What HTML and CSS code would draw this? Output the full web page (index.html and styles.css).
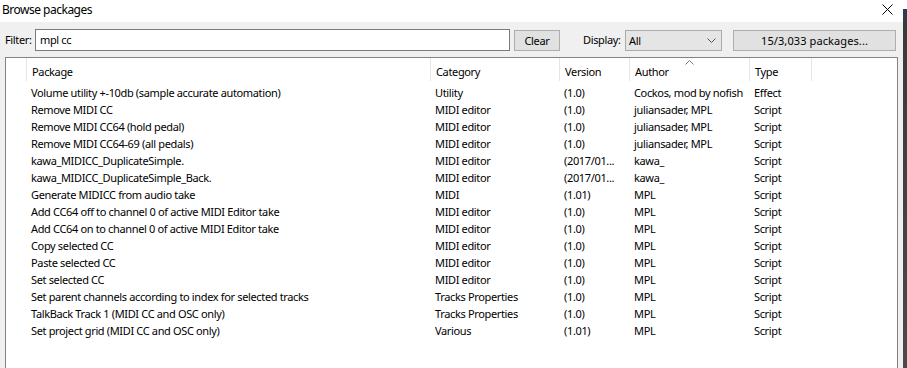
FILE: index.html
```html
<!DOCTYPE html>
<html>
<head>
<meta charset="utf-8">
<link rel="stylesheet" href="styles.css">
</head>
<body>
<div class="window">
  <div class="dialog">
    <div class="titlebar">
      <span class="title">Browse packages</span>
      <svg class="close" width="11" height="11" viewBox="0 0 11 11"><path d="M0.5 0.5L10.5 10.5M10.5 0.5L0.5 10.5" stroke="#000" stroke-width="1"/></svg>
    </div>
    <div class="toolbar">
      <label class="lbl filter">Filter:</label>
      <div class="input">mpl cc</div>
      <div class="btn clear">Clear</div>
      <label class="lbl display">Display:</label>
      <div class="select">
        <span>All</span>
        <svg width="9" height="5" viewBox="0 0 9 5"><path d="M0.5 0.5L4.5 4.5L8.5 0.5" fill="none" stroke="#555" stroke-width="1"/></svg>
      </div>
      <div class="btn count">15/3,033 packages...</div>
    </div>
    <div class="list">
      <div class="row head">
        <div class="c c0"></div>
        <div class="c">Package</div>
        <div class="c">Category</div>
        <div class="c">Version</div>
        <div class="c author">Author<svg class="sort" width="9" height="5" viewBox="0 0 9 5"><path d="M0.5 4.5L4.5 0.5L8.5 4.5" fill="none" stroke="#777" stroke-width="1"/></svg></div>
        <div class="c">Type</div>
        <div class="c"></div>
      </div>
      <div class="row"><div class="c"></div><div class="c">Volume utility +-10db (sample accurate automation)</div><div class="c">Utility</div><div class="c">(1.0)</div><div class="c">Cockos, mod by nofish</div><div class="c">Effect</div></div>
      <div class="row"><div class="c"></div><div class="c">Remove MIDI CC</div><div class="c">MIDI editor</div><div class="c">(1.0)</div><div class="c">juliansader, MPL</div><div class="c">Script</div></div>
      <div class="row"><div class="c"></div><div class="c">Remove MIDI CC64 (hold pedal)</div><div class="c">MIDI editor</div><div class="c">(1.0)</div><div class="c">juliansader, MPL</div><div class="c">Script</div></div>
      <div class="row"><div class="c"></div><div class="c">Remove MIDI CC64-69 (all pedals)</div><div class="c">MIDI editor</div><div class="c">(1.0)</div><div class="c">juliansader, MPL</div><div class="c">Script</div></div>
      <div class="row"><div class="c"></div><div class="c">kawa_MIDICC_DuplicateSimple.</div><div class="c">MIDI editor</div><div class="c">(2017/01...</div><div class="c">kawa_</div><div class="c">Script</div></div>
      <div class="row"><div class="c"></div><div class="c">kawa_MIDICC_DuplicateSimple_Back.</div><div class="c">MIDI editor</div><div class="c">(2017/01...</div><div class="c">kawa_</div><div class="c">Script</div></div>
      <div class="row"><div class="c"></div><div class="c">Generate MIDICC from audio take</div><div class="c">MIDI</div><div class="c">(1.01)</div><div class="c">MPL</div><div class="c">Script</div></div>
      <div class="row"><div class="c"></div><div class="c">Add CC64 off to channel 0 of active MIDI Editor take</div><div class="c">MIDI editor</div><div class="c">(1.0)</div><div class="c">MPL</div><div class="c">Script</div></div>
      <div class="row"><div class="c"></div><div class="c">Add CC64 on to channel 0 of active MIDI Editor take</div><div class="c">MIDI editor</div><div class="c">(1.0)</div><div class="c">MPL</div><div class="c">Script</div></div>
      <div class="row"><div class="c"></div><div class="c">Copy selected CC</div><div class="c">MIDI editor</div><div class="c">(1.0)</div><div class="c">MPL</div><div class="c">Script</div></div>
      <div class="row"><div class="c"></div><div class="c">Paste selected CC</div><div class="c">MIDI editor</div><div class="c">(1.0)</div><div class="c">MPL</div><div class="c">Script</div></div>
      <div class="row"><div class="c"></div><div class="c">Set selected CC</div><div class="c">MIDI editor</div><div class="c">(1.0)</div><div class="c">MPL</div><div class="c">Script</div></div>
      <div class="row"><div class="c"></div><div class="c">Set parent channels according to index for selected tracks</div><div class="c">Tracks Properties</div><div class="c">(1.0)</div><div class="c">MPL</div><div class="c">Script</div></div>
      <div class="row"><div class="c"></div><div class="c">TalkBack Track 1 (MIDI CC and OSC only)</div><div class="c">Tracks Properties</div><div class="c">(1.0)</div><div class="c">MPL</div><div class="c">Script</div></div>
      <div class="row"><div class="c"></div><div class="c">Set project grid (MIDI CC and OSC only)</div><div class="c">Various</div><div class="c">(1.01)</div><div class="c">MPL</div><div class="c">Script</div></div>
    </div>
  </div>
  <div class="edge"></div>
</div>
</body>
</html>
```

FILE: styles.css
```css
* { box-sizing: border-box; }
html, body { margin: 0; padding: 0; }
body {
  width: 907px;
  height: 368px;
  overflow: hidden;
  background: #f0f0f0;
  font-family: "Noto Sans", "Open Sans", sans-serif;
  font-size: 11px;
  letter-spacing: -0.35px;
  color: #000;
}
.window { display: flex; height: 368px; }
.dialog { width: 903px; display: flex; flex-direction: column; }
.edge {
  width: 4px;
  background: linear-gradient(#ffffff 0, #ffffff 9px, #2d3b4f 9px, #3a3a3a 30px, #4a4a4a 100%);
}
.titlebar {
  height: 22px;
  background: #fff;
  display: flex;
  align-items: center;
  justify-content: space-between;
  padding: 0 10px 3px 2px;
}
.title { font-size: 12px; letter-spacing: -0.5px; line-height: 16px; }
.close { margin-top: -1px; }
.toolbar {
  display: flex;
  align-items: center;
  height: 22px;
  margin-top: 7px;
  padding-left: 5px;
}
.lbl { line-height: 22px; white-space: nowrap; }
.filter { width: 27px; }
.input {
  margin-left: 3px;
  width: 475px;
  height: 22px;
  border: 1px solid #7a7a7a;
  background: #fff;
  padding-left: 4px;
  line-height: 20px;
}
.btn {
  height: 21px;
  background: #e1e1e1;
  border: 1px solid #adadad;
  display: flex;
  align-items: center;
  justify-content: center;
}
.clear { width: 46px; margin-left: 4px; }
.display { margin-left: 23px; width: 39px; }
.select {
  margin-left: 3px;
  width: 97px;
  height: 21px;
  background: #e5e5e5;
  border: 1px solid #acacac;
  display: flex;
  align-items: center;
  justify-content: space-between;
  padding: 0 5px 0 3px;
}
.count { width: 163px; margin-left: 11px; letter-spacing: 0.1px; }
.list {
  margin: 6px 0 0 5px;
  width: 893px;
  flex: 1;
  background: #fff;
  border: 1px solid #828282;
  border-bottom: none;
}
.row {
  display: grid;
  grid-template-columns: 20px 404px 129px 70px 120px 62px 1fr;
  height: 17px;
  line-height: 17px;
}
.row .c { padding-left: 5px; white-space: nowrap; overflow: hidden; }
.row .c:first-child { padding-left: 0; }
.head { height: 26px; line-height: 28px; }
.head .c { border-left: 1px solid #e5e5e5; height: 23px; }
.head .c0 { border-left: none; }
.author { position: relative; overflow: visible !important; }
.sort { position: absolute; left: 55px; top: 2px; }
```
